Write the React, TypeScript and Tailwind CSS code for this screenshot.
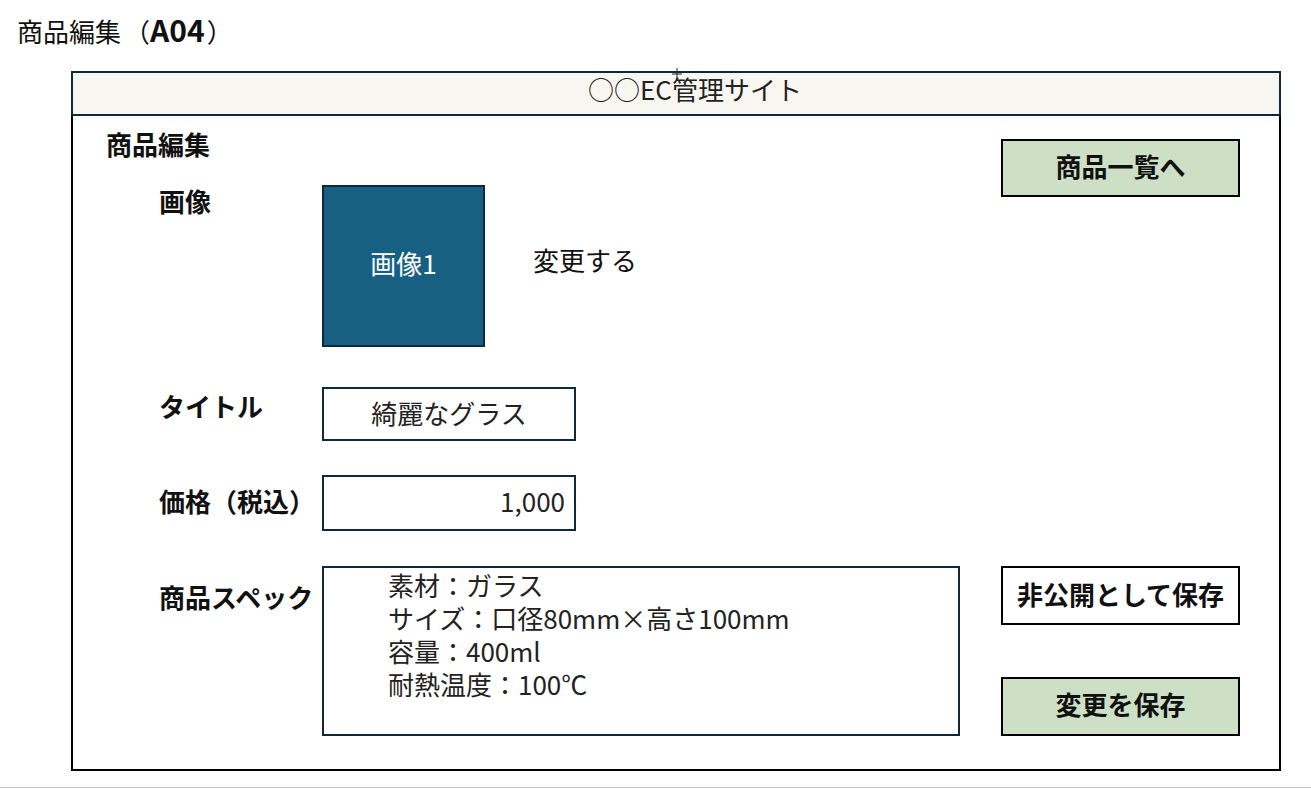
import React from "react";

const font = `"Noto Sans CJK JP", "Noto Sans", sans-serif`;

export default function App() {
  return (
    <div
      className="relative w-[1311px] h-[789px] bg-white text-[#111] overflow-hidden"
      style={{ fontFamily: font }}
    >
      <div className="pl-[17px] pt-[11px] h-[71px] text-[26px] leading-[36px] whitespace-nowrap">
        商品編集<span className="ml-[3px]">（</span>
        <span className="font-bold text-[30px]">A04</span>
        <span className="ml-[2px]">）</span>
      </div>

      <div className="ml-[71px] w-[1210px]">
        <div className="relative h-[45px] border-2 border-[#0e2a3a] bg-[#f8f6f0] flex items-center justify-center pl-[38px] pb-[10px] text-[26px] leading-[36px] text-[#222]">
          ○○EC管理サイト
          <svg
            className="absolute left-[598px] top-[-5px]"
            width="12"
            height="14"
            viewBox="0 0 12 14"
          >
            <path d="M6 0 V13 M1 6 H11" stroke="#222" strokeWidth="1" fill="none" />
          </svg>
        </div>

        <div className="h-[655px] border-x-2 border-b-2 border-black flex">
          <div className="flex-1 pl-[33px]">
            <div className="mt-[10px] text-[26px] leading-[36px] font-bold">商品編集</div>

            <div className="mt-[23px] pl-[53px] flex items-start">
              <div className="w-[163px] -mt-[2px] text-[26px] leading-[36px] font-bold">画像</div>
              <div className="w-[163px] h-[162px] bg-[#176082] border-2 border-[#0b2a3c] flex items-center justify-center pb-[6px] text-white text-[26px] leading-[36px]">
                画像1
              </div>
              <div className="ml-[48px] mt-[57px] text-[26px] leading-[36px]">変更する</div>
            </div>

            <div className="mt-[40px] pl-[53px] flex items-start">
              <div className="w-[163px] mt-[1px] text-[26px] leading-[36px] font-bold">タイトル</div>
              <div className="w-[254px] h-[54px] border-2 border-[#0e2a3a] flex items-center justify-center pb-[2px] text-[26px] leading-[36px] text-[#222]">
                綺麗なグラス
              </div>
            </div>

            <div className="mt-[34px] pl-[53px] flex items-start">
              <div className="w-[163px] mt-[8px] text-[26px] leading-[36px] font-bold whitespace-nowrap">
                価格（税込）
              </div>
              <div className="w-[254px] h-[56px] border-2 border-[#0e2a3a] flex items-center justify-end pr-[9px] pb-[4px] text-[26px] leading-[36px] text-[#222]">
                1,000
              </div>
            </div>

            <div className="mt-[35px] pl-[53px] flex items-start">
              <div className="w-[163px] mt-[13px] text-[26px] leading-[36px] font-bold whitespace-nowrap">
                商品スペック
              </div>
              <div className="w-[638px] h-[170px] border-2 border-[#0e2a3a] pl-[64px] text-[26px] leading-[33px] text-[#222]">
                <div>素材：ガラス</div>
                <div>サイズ：口径80mm×高さ100mm</div>
                <div>容量：400ml</div>
                <div>耐熱温度：100℃</div>
              </div>
            </div>
          </div>

          <div className="pr-[39px] pt-[23px] flex flex-col">
            <div className="w-[239px] h-[58px] bg-[#cde0c5] border-2 border-black flex items-center justify-center pb-[4px] text-[26px] leading-[36px] font-bold">
              商品一覧へ
            </div>
            <div className="mt-[369px] w-[239px] h-[59px] bg-white border-2 border-black flex items-center justify-center pb-[4px] text-[26px] leading-[36px] font-bold">
              非公開として保存
            </div>
            <div className="mt-[52px] w-[239px] h-[59px] bg-[#cde0c5] border-2 border-black flex items-center justify-center pb-[5px] text-[26px] leading-[36px] font-bold">
              変更を保存
            </div>
          </div>
        </div>
      </div>

      <div className="mt-[16px] h-[1px] bg-[#c8c8c8]" />
    </div>
  );
}
